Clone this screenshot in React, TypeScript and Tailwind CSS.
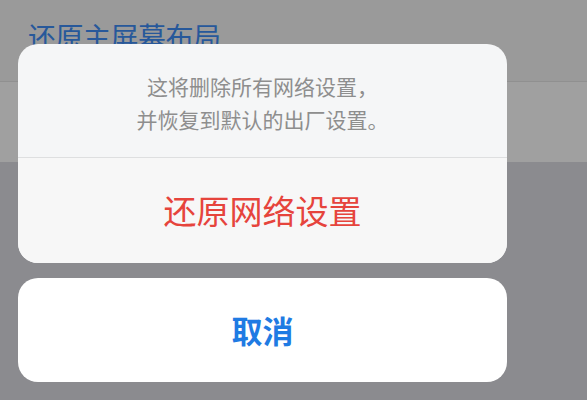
import React from "react";

const font = { fontFamily: '"Noto Sans CJK SC", "Noto Sans", sans-serif' };

export default function App() {
  return (
    <div className="relative w-[587px] h-[400px] overflow-hidden bg-[#8b8b8f]" style={font}>
      {/* dimmed background page */}
      <div className="flex flex-col">
        <div className="h-[82px] bg-[#9a9a9a] border-b border-[#909090] pl-[28px] pt-[22px]">
          <div className="text-[28px] leading-none text-[#27589a] tracking-[-0.5px]">还原主屏幕布局</div>
        </div>
        <div className="h-[80px] bg-[#a0a0a0]" />
      </div>

      {/* action sheet */}
      <div className="absolute left-[18px] top-[44px] w-[489px] flex flex-col gap-[15px]">
        <div className="rounded-[20px] bg-[#f5f6f7] overflow-hidden flex flex-col">
          <div className="h-[113px] pt-[26px] flex flex-col items-center text-[21px] leading-[33px] text-[#8e8e8e]">
            <div>这将删除所有网络设置，</div>
            <div>并恢复到默认的出厂设置。</div>
          </div>
          <div className="h-px bg-[#dedfe0]" />
          <div className="h-[105px] flex items-center justify-center bg-[#f7f7f7] text-[33px] text-[#e6443c]">
            还原网络设置
          </div>
        </div>
        <div className="h-[104px] rounded-[20px] bg-white flex items-center justify-center text-[31px] font-semibold text-[#1f7be3]">
          取消
        </div>
      </div>
    </div>
  );
}
